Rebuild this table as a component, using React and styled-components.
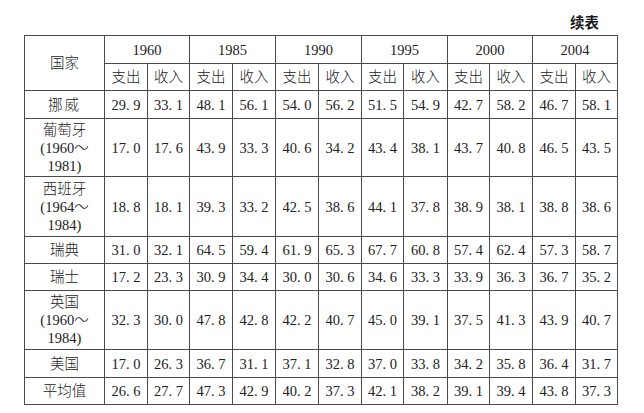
import React from "react";
import styled, { createGlobalStyle } from "styled-components";

const Global = createGlobalStyle`
  html, body { margin: 0; padding: 0; background: #fff; }
  body { width: 644px; height: 413px; overflow: hidden; }
`;

const Page = styled.div`
  width: 644px;
  height: 413px;
  padding-left: 24px;
  box-sizing: border-box;
  font-family: "Liberation Serif", "Noto Sans CJK SC", serif;
  color: #222;
`;

const TitleRow = styled.div`
  height: 35px;
  width: 593px;
  display: flex;
  justify-content: flex-end;
  align-items: flex-end;
  padding-right: 18px;
  padding-bottom: 5px;
  box-sizing: border-box;
`;

const Title = styled.span`
  font-family: "Noto Sans CJK SC", sans-serif;
  font-weight: 700;
  font-size: 14.5px;
  line-height: 16px;
  color: #1a1a1a;
`;

const Table = styled.table`
  width: 593px;
  table-layout: fixed;
  border-collapse: collapse;
`;

const Row = styled.tr`
  height: ${(p) => p.$h}px;
`;

const Cell = styled.td`
  border: 1px solid #4a4a4a;
  padding: 0;
  text-align: center;
  vertical-align: middle;
  font-size: 14.5px;
  line-height: 18px;
  font-weight: 300;
  white-space: nowrap;
  letter-spacing: ${(p) => (p.$spaced ? "2px" : "0")};
`;

const years = ["1960", "1985", "1990", "1995", "2000", "2004"];
const widths = [43, 42, 43, 43, 43, 43, 42, 44, 42, 43, 43, 42];

const fmt = (v) => v.replace(".", ". ");

const rows = [
  { name: ["挪威"], h: 28, spaced: true, v: "29.9 33.1 48.1 56.1 54.0 56.2 51.5 54.9 42.7 58.2 46.7 58.1" },
  { name: ["葡萄牙", "(1960～", "1981)"], h: 58, v: "17.0 17.6 43.9 33.3 40.6 34.2 43.4 38.1 43.7 40.8 46.5 43.5" },
  { name: ["西班牙", "(1964～", "1984)"], h: 60, v: "18.8 18.1 39.3 33.2 42.5 38.6 44.1 37.8 38.9 38.1 38.8 38.6" },
  { name: ["瑞典"], h: 27, v: "31.0 32.1 64.5 59.4 61.9 65.3 67.7 60.8 57.4 62.4 57.3 58.7" },
  { name: ["瑞士"], h: 27, v: "17.2 23.3 30.9 34.4 30.0 30.6 34.6 33.3 33.9 36.3 36.7 35.2" },
  { name: ["英国", "(1960～", "1984)"], h: 59, v: "32.3 30.0 47.8 42.8 42.2 40.7 45.0 39.1 37.5 41.3 43.9 40.7" },
  { name: ["美国"], h: 28, v: "17.0 26.3 36.7 31.1 37.1 32.8 37.0 33.8 34.2 35.8 36.4 31.7" },
  { name: ["平均值"], h: 27, v: "26.6 27.7 47.3 42.9 40.2 37.3 42.1 38.2 39.1 39.4 43.8 37.3" },
];

export default function App() {
  return (
    <>
      <Global />
      <Page>
        <TitleRow>
          <Title>续表</Title>
        </TitleRow>
        <Table>
          <colgroup>
            <col style={{ width: 80 }} />
            {widths.map((w, i) => (
              <col key={i} style={{ width: w }} />
            ))}
          </colgroup>
          <tbody>
            <Row $h={28}>
              <Cell rowSpan={2}>国家</Cell>
              {years.map((y) => (
                <Cell key={y} colSpan={2}>{y}</Cell>
              ))}
            </Row>
            <Row $h={27}>
              {years.map((y) => (
                <React.Fragment key={y}>
                  <Cell>支出</Cell>
                  <Cell>收入</Cell>
                </React.Fragment>
              ))}
            </Row>
            {rows.map((r) => (
              <Row key={r.name[0]} $h={r.h}>
                <Cell $spaced={r.spaced}>
                  {r.name.map((n, i) => (
                    <div key={i}>{n}</div>
                  ))}
                </Cell>
                {r.v.split(" ").map((x, i) => (
                  <Cell key={i}>{fmt(x)}</Cell>
                ))}
              </Row>
            ))}
          </tbody>
        </Table>
      </Page>
    </>
  );
}
